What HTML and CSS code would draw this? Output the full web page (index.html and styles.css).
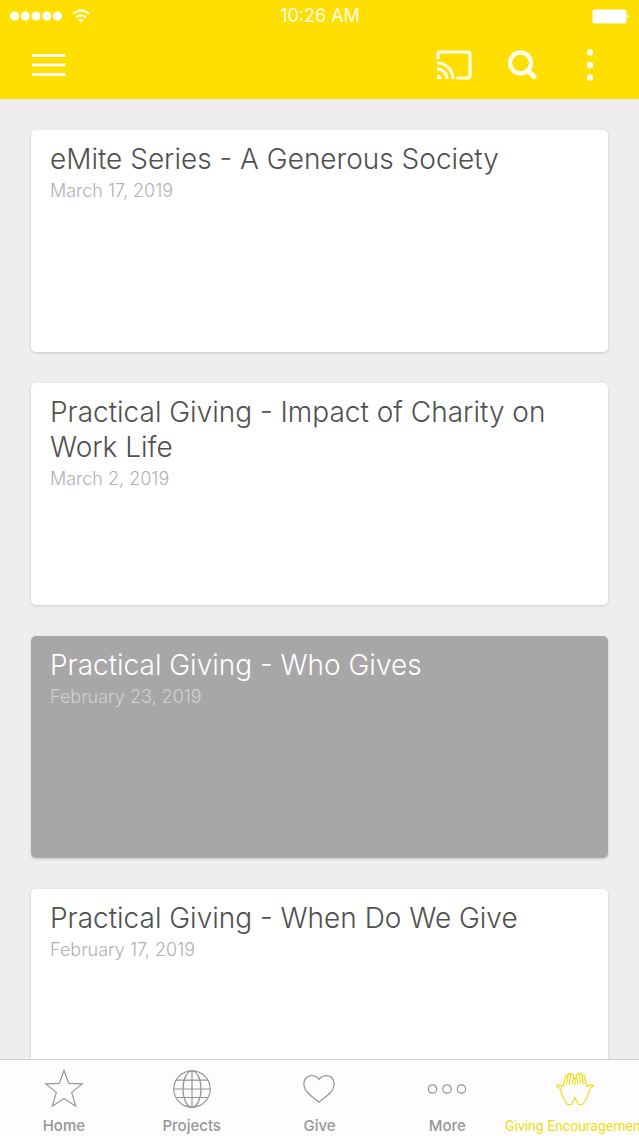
FILE: index.html
```html
<!DOCTYPE html>
<html lang="en">
<head>
<meta charset="utf-8">
<meta name="viewport" content="width=device-width, initial-scale=1">
<title>Giving Encouragement</title>
<link rel="stylesheet" href="styles.css">
</head>
<body>
<div class="app">
  <header class="header">
    <div class="status">
      <div class="status-left">
        <svg class="signal" width="52" height="10" viewBox="0 0 52 10" aria-hidden="true">
          <circle cx="4.5" cy="5" r="4.5"/><circle cx="15.2" cy="5" r="4.5"/><circle cx="26" cy="5" r="4.5"/><circle cx="36.8" cy="5" r="4.5"/><circle cx="47.5" cy="5" r="4.5"/>
        </svg>
        <svg class="wifi" width="18" height="14" viewBox="0 0 18 14" aria-hidden="true">
          <path class="wifi-arc" d="M1 5Q9-2 17 5M4 8.600Q9 4.300 14 8.600"/>
          <path d="M9 13.8L6.2 10.900Q9 8.700 11.800 10.900Z"/>
        </svg>
      </div>
      <time class="clock">10:26 AM</time>
      <svg class="battery" width="38" height="15" viewBox="0 0 38 15" aria-hidden="true">
        <rect x="0.5" y="0.5" width="34" height="14" rx="2"/><path d="M35.7 5Q38 7.5 35.7 10Z"/>
      </svg>
    </div>
    <div class="toolbar">
      <button class="tool" type="button" aria-label="Menu">
        <svg width="34" height="24" viewBox="0 0 34 24"><path class="menu-lines" d="M0 2.5H33.5M0 12H33.5M0 21.5H33.5"/></svg>
      </button>
      <div class="actions">
        <button class="tool" type="button" aria-label="Cast">
          <svg width="36" height="30" viewBox="0 0 36 30"><path class="stroke" d="M2 9V4.500Q2 2 4.500 2H31.500Q34 2 34 4.500V25.500Q34 28 31.500 28H20.500M1 13A16 16 0 0 1 17 29M1 19A10 10 0 0 1 11 29"/><path class="solid" d="M1 24A5.500 5.500 0 0 1 6 29H1Z"/></svg>
        </button>
        <button class="tool" type="button" aria-label="Search">
          <svg width="30" height="30" viewBox="0 0 30 30"><circle class="lens" cx="12.500" cy="13" r="10.500"/><path class="handle" d="M20 20.500L26 26.500"/></svg>
        </button>
        <button class="tool" type="button" aria-label="More options">
          <svg width="8" height="32" viewBox="0 0 8 32"><g class="solid"><circle cx="4" cy="3.500" r="3.200"/><circle cx="4" cy="16" r="3.200"/><circle cx="4" cy="28.500" r="3.200"/></g></svg>
        </button>
      </div>
    </div>
  </header>

  <main class="list">
    <article class="card">
      <h2 class="title">eMite Series - A Generous Society</h2>
      <time class="date" datetime="2019-03-17">March 17, 2019</time>
    </article>
    <article class="card">
      <h2 class="title">Practical Giving - Impact of Charity on Work Life</h2>
      <time class="date" datetime="2019-03-02">March 2, 2019</time>
    </article>
    <article class="card card-pressed">
      <h2 class="title">Practical Giving - Who Gives</h2>
      <time class="date" datetime="2019-02-23">February 23, 2019</time>
    </article>
    <article class="card">
      <h2 class="title">Practical Giving - When Do We Give</h2>
      <time class="date" datetime="2019-02-17">February 17, 2019</time>
    </article>
  </main>

  <nav class="tabs">
    <a class="tab" href="#home">
      <svg class="tab-icon" viewBox="0 0 40 40"><path d="M20 1.500L24.800 14.300L38.300 14.900L27.700 23.400L31.600 37.200L20 29.500L8.400 37.200L12.300 23.400L1.700 14.900L15.200 14.300Z"/></svg>
      <span>Home</span>
    </a>
    <a class="tab" href="#projects">
      <svg class="tab-icon" viewBox="0 0 40 40"><circle cx="20" cy="20" r="18.200"/><ellipse cx="20" cy="20" rx="9" ry="18.200"/><path d="M20 1.800V38.200M1.800 20H38.200M4.200 11.200H35.800M4.200 28.500H35.800"/></svg>
      <span>Projects</span>
    </a>
    <a class="tab" href="#give">
      <svg class="tab-icon" viewBox="0 0 40 40"><path d="M20 10.500C17 5.500 10 5.500 7 9C3.500 13 4.500 19.500 8.500 23.500C12 27.500 16 29.500 20 33C24 29.500 28 27.500 31.500 23.500C35.500 19.500 36.500 13 33 9C30 5.500 23 5.500 20 10.500Z"/></svg>
      <span>Give</span>
    </a>
    <a class="tab" href="#more">
      <svg class="tab-icon" viewBox="0 0 40 40"><circle cx="5.500" cy="20" r="4.200"/><circle cx="20" cy="20" r="4.200"/><circle cx="34.500" cy="20" r="4.200"/></svg>
      <span>More</span>
    </a>
    <a class="tab tab-active" href="#encouragement" aria-current="page">
      <svg class="tab-icon" viewBox="0 0 40 40"><path d="M20 28.500L16.500 35.500H12.500C9.500 31 6.500 27 6 22C5.700 19.500 3.800 18.200 1.600 17C1.500 15.500 4 15.300 8 17.500L10.500 8C10.800 5.500 13 5.500 12.700 8C13.200 3.500 16 4 15.600 7C16.500 3 19 4.500 18.500 8L20 10L21.500 8C21 4.500 23.500 3 24.400 7C24 4 26.800 3.500 27.300 8C27 5.500 29.200 5.500 29.500 8L32 17.500C36 15.300 38.500 15.500 38.400 17C36.200 18.200 34.300 19.500 34 22C33.500 27 30.500 31 27.500 35.500H23.500ZM12.700 8L11.500 15.500M15.600 7L14 15.500M18.500 8L17 15.500M20 10V16M21.500 8L23 15.500M24.400 7L26 15.500M27.300 8L28.500 15.500"/></svg>
      <span>Giving Encouragement</span>
    </a>
  </nav>
</div>
</body>
</html>
```
FILE: styles.css
```css
* {
  box-sizing: border-box;
}

body {
  margin: 0;
  font-family: Inter, "Liberation Sans", sans-serif;
  background: #efedee;
}

.app {
  display: flex;
  flex-direction: column;
  height: 100vh;
  overflow: hidden;
}

.header {
  flex: none;
  color: #fffdea;
  background: #fedf00;
}

.status {
  display: grid;
  grid-template-columns: 1fr auto 1fr;
  align-items: center;
  height: 32px;
  padding: 0 9px 0 10px;
  fill: #ffffff;
}

.status-left {
  display: flex;
  align-items: center;
  gap: 10px;
}

.wifi {
  fill: #fffbd8;
}

.wifi-arc {
  fill: none;
  stroke: #fffbd8;
  stroke-width: 2.2;
}

.clock {
  font-size: 18px;
  line-height: 32px;
}

.battery {
  justify-self: end;
}

.toolbar {
  display: flex;
  align-items: center;
  justify-content: space-between;
  height: 67px;
  padding: 0 45px 1px 32px;
}

.actions {
  display: flex;
  align-items: center;
  gap: 36px;
}

.actions .tool:last-child {
  margin-left: 12px;
}

.tool {
  display: flex;
  padding: 0;
  border: 0;
  color: inherit;
  background: none;
}

.menu-lines,
.stroke,
.lens,
.handle {
  fill: none;
  stroke: currentColor;
  stroke-width: 3.2;
}

.lens {
  stroke-width: 4.4;
}

.handle {
  stroke-width: 5;
  stroke-linecap: round;
}

.solid {
  fill: currentColor;
}

.list {
  flex: 1;
  min-height: 0;
  display: flex;
  flex-direction: column;
  gap: 31px;
  padding: 31px 31px 0;
  overflow: hidden;
}

.card {
  flex: none;
  min-height: 222px;
  padding: 12px 19px;
  border-radius: 5px;
  color: #505050;
  background: #ffffff;
  box-shadow: 0 1px 3px rgba(0, 0, 0, 0.16);
}

.title {
  margin: 0;
  font-size: 28px;
  font-weight: 300;
  line-height: 35px;
}

.date {
  display: block;
  font-size: 18px;
  font-weight: 300;
  line-height: 28px;
  color: #b2b0b1;
}

.card-pressed {
  color: #ffffff;
  background: #a8a6a7;
}

.card-pressed .date {
  color: #d2d0d1;
}

.tabs {
  flex: none;
  display: grid;
  grid-template-columns: repeat(5, minmax(0, 1fr));
  height: 77px;
  padding-top: 9px;
  border-top: 1px solid #cfcdce;
  background: #fefdfe;
  overflow: hidden;
}

.tab {
  display: flex;
  flex-direction: column;
  align-items: center;
  gap: 7px;
  font-size: 15px;
  font-weight: 500;
  line-height: 20px;
  white-space: nowrap;
  text-decoration: none;
  color: #979597;
}

.tab-icon {
  flex: none;
  width: 40px;
  height: 40px;
  fill: none;
  stroke: currentColor;
  stroke-width: 1.2;
}

.tab-active {
  font-family: Roboto, "Liberation Sans", sans-serif;
  font-size: 14px;
  font-weight: 400;
  color: #f2dc12;
}
```
